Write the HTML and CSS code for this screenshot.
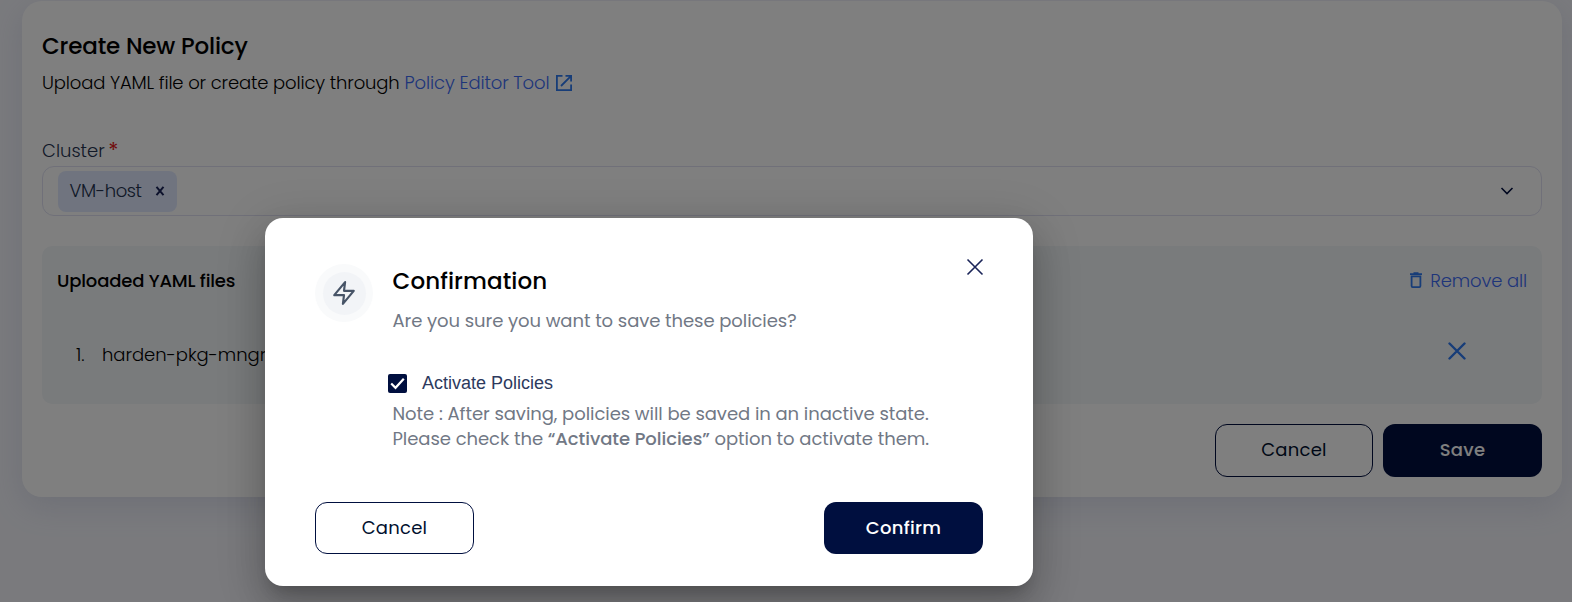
FILE: index.html
```html
<!DOCTYPE html>
<html lang="en">
<head>
<meta charset="utf-8">
<title>Create New Policy</title>
<link rel="stylesheet" href="styles.css">
</head>
<body>
<main class="card">
  <h1 class="card-title">Create New Policy</h1>
  <p class="card-subtitle"><span class="subtitle-text">Upload YAML file or create policy through</span>
    <a class="link editor-link">Policy Editor Tool</a>
    <svg class="icon-external" viewBox="0 0 18 18"><path d="M7.500 1.900H1.900v14.200h14.200v-5.600M10.500 1.900h5.600v5.600M15.600 2.400L6 12"/></svg>
  </p>
  <label class="field-label"><span>Cluster</span><span class="required">*</span></label>
  <div class="select">
    <span class="tag"><span class="tag-text">VM-host</span><svg class="tag-x" viewBox="0 0 10 10"><path d="M1.500 .8l7 8.400M8.500 .8l-7 8.400"/></svg></span>
    <svg class="chevron" viewBox="0 0 14 10"><path d="M1.500 2l5.500 5.500L12.500 2"/></svg>
  </div>
  <section class="files">
    <header class="files-head">
      <h2 class="files-title">Uploaded YAML files</h2>
      <a class="link remove-all"><svg class="icon-trash" viewBox="0 0 14 18"><path d="M1 3.200h12M4.500 2.200h5M2.600 5.300v9.800q0 1 1 1h6.800q1 0 1-1V5.300z"/></svg><span>Remove all</span></a>
    </header>
    <div class="file-row">
      <span class="file-index">1.</span>
      <span class="file-name">harden-pkg-mngr</span>
      <svg class="file-remove" viewBox="0 0 18 18"><path d="M1.500 1.500l15 15M16.500 1.500l-15 15"/></svg>
    </div>
  </section>
  <footer class="actions">
    <button class="btn btn-outline">Cancel</button>
    <button class="btn btn-solid">Save</button>
  </footer>
</main>
<div class="backdrop"></div>
<div class="dialog" role="dialog">
  <div class="dialog-top">
    <div class="badge"><div class="badge-inner">
      <svg class="bolt" viewBox="0 0 24 24"><path d="M13 2L3 14h9l-1 8 10-12h-9l1-8z"/></svg>
    </div></div>
    <div class="dialog-text">
      <h2 class="dialog-title">Confirmation</h2>
      <p class="dialog-sub">Are you sure you want to save these policies?</p>
      <label class="check"><span class="box"><svg viewBox="0 0 19 19"><path d="M3.200 9.500l4.300 4.300 8.300-9"/></svg></span><span>Activate Policies</span></label>
      <p class="note">Note : After saving, policies will be saved in an inactive state.<br>Please check the <b>“Activate Policies”</b> option to activate them.</p>
    </div>
    <svg class="close" viewBox="0 0 18 18"><path d="M1.500 1.500l15 15M16.500 1.500l-15 15"/></svg>
  </div>
  <div class="dialog-actions">
    <button class="btn btn-outline">Cancel</button>
    <button class="btn btn-solid">Confirm</button>
  </div>
</div>
</body>
</html>
```
FILE: styles.css
```css
* { box-sizing: border-box; }
body {
  margin: 0;
  height: 602px;
  overflow: hidden;
  position: relative;
  padding: 1px 10px 0 22px;
  background: #f4f5fb;
  font-family: Poppins, Inter, "Noto Sans", sans-serif;
  font-size: 18px;
  color: #000;
}
h1, h2, p { margin: 0; }
.card {
  height: 496px;
  padding: 29px 20px 0;
  background: #fff;
  border-radius: 20px;
  box-shadow: 0 10px 30px rgba(140, 150, 190, .22);
}
.card-title { font-size: 23px; font-weight: 500; line-height: 32px; letter-spacing: -.17px; }
.card-subtitle { display: flex; align-items: center; height: 27px; margin-top: 7px; font-weight: 300; white-space: nowrap; }
.subtitle-text { letter-spacing: -.15px; }
.link { color: #3d6bf5; font-weight: 300; letter-spacing: -.12px; }
.editor-link { margin-left: 5px; }
.icon-external { width: 18px; height: 18px; margin-left: 5.500px; margin-top: 1px; fill: none; stroke: #2f7af0; stroke-width: 1.8; }
.field-label { display: flex; height: 27px; margin-top: 41px; line-height: 27px; font-weight: 300; color: #24324f; }
.required { margin-left: 3.500px; color: #e31a1a; font-size: 21px; font-weight: 400; }
.select { display: flex; align-items: center; justify-content: space-between; height: 50px; margin-top: 2px; padding: 0 27px 0 15px; border: 1px solid #e0e1f2; border-radius: 12px; }
.tag { display: flex; align-items: center; width: 119px; height: 41px; padding-left: 11.500px; border-radius: 8px; background: #e1e9ff; color: #24324f; font-weight: 300; }
.tag-text { letter-spacing: -.4px; padding-bottom: 1px; }
.tag-x { width: 10px; height: 10px; margin-left: 13px; margin-bottom: 1px; fill: none; stroke: #1b2559; stroke-width: 2; }
.chevron { width: 14px; height: 10px; fill: none; stroke: #000f3f; stroke-width: 1.6; }
.files { height: 158px; margin-top: 30px; padding: 20px 15px 0; border-radius: 10px; background: #f3f6f9; }
.files-head { display: flex; justify-content: space-between; height: 28px; align-items: center; }
.files-title { font-size: 18px; font-weight: 500; letter-spacing: -.17px; }
.remove-all { display: flex; align-items: center; letter-spacing: -.14px; }
.icon-trash { width: 14px; height: 18px; margin-right: 7px; fill: none; stroke: #2f7af0; stroke-width: 1.8; }
.file-row { display: flex; align-items: center; height: 28px; margin-top: 46px; padding: 0 61px 0 19px; font-weight: 300; }
.file-index { width: 26px; }
.file-name { letter-spacing: -.05px; }
.file-remove { width: 18px; height: 18px; margin: -7px 0 0 auto; fill: none; stroke: #2f7af0; stroke-width: 2.4; stroke-linecap: round; }
.actions { display: flex; justify-content: flex-end; gap: 10px; margin-top: 20px; }
.btn { width: 159px; height: 53px; padding: 0 0 2px; border-radius: 12px; font: 400 18px/27px Poppins, Inter, "Noto Sans", sans-serif; }
.btn-outline { border: 1px solid #000f3f; background: transparent; color: #000f2e; letter-spacing: .25px; }
.actions .btn-outline { width: 158px; }
.btn-solid { border: 0; background: #000f3f; color: #fff; font-weight: 500; letter-spacing: .3px; }
.backdrop { position: absolute; inset: 0; background: rgba(0, 0, 0, .5); }
.dialog {
  position: absolute; left: 265px; top: 218px; width: 768px; height: 368px;
  display: flex; flex-direction: column; justify-content: space-between;
  padding: 46px 50px 32px; border-radius: 18px; background: #fff;
  box-shadow: 0 11px 15px -7px rgba(0,0,0,.2), 0 24px 38px 3px rgba(0,0,0,.14), 0 9px 46px 8px rgba(0,0,0,.12);
}
.dialog-top { display: flex; }
.badge { display: grid; place-items: center; width: 58px; height: 58px; border-radius: 50%; background: #f9fafb; }
.badge-inner { display: grid; place-items: center; width: 43px; height: 43px; border-radius: 50%; background: #f2f4f7; }
.bolt { width: 26px; height: 26px; fill: none; stroke: #475467; stroke-width: 2; stroke-linejoin: round; }
.dialog-text { margin-left: 19.500px; white-space: nowrap; }
.dialog-title { font-size: 23px; font-weight: 500; line-height: 34px; letter-spacing: .1px; }
.dialog-sub { margin-top: 9px; line-height: 28px; color: #717885; letter-spacing: -.07px; }
.check { display: flex; align-items: center; gap: 15px; height: 28px; margin: 34px 0 0 -4.500px; font-family: "Liberation Sans", Arial, sans-serif; color: #2d3a5e; }
.box { display: grid; width: 19px; height: 19px; border-radius: 2px; background: #000f3f; }
.box svg { width: 19px; height: 19px; fill: none; stroke: #fff; stroke-width: 2.2; }
.note { margin-top: 4px; line-height: 25px; color: #717885; letter-spacing: -.055px; }
.note b { font-weight: 500; }
.close { width: 18px; height: 18px; margin: -6.500px -1px 0 auto; fill: none; stroke: #1b2559; stroke-width: 1.6; }
.dialog-actions { display: flex; justify-content: space-between; }
.dialog-actions .btn { height: 52px; }
```
